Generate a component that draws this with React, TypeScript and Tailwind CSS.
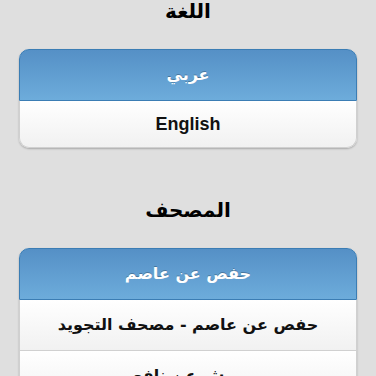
const arabic = { fontFamily: '"DejaVu Sans", "Liberation Sans", sans-serif' }

type Option = { label: string; latin?: boolean }

const Section = ({ title, selected, options }: { title: string; selected: Option; options: Option[] }) => {
    return <div className="flex flex-col">
        <h2 className="h-[20px] text-center text-[20px] leading-[22px] font-bold text-black" style={arabic}>{title}</h2>
        <div className="mx-[19px] mt-[29px] rounded-[10px] bg-white shadow-[0_1px_2px_rgba(0,0,0,0.25)]">
            <div className="flex h-[52px] items-center justify-center rounded-t-[10px] border border-[#3b7db4] bg-gradient-to-b from-[#5590c6] to-[#6dacdb] text-[16px] font-bold text-white [text-shadow:0_-1px_0_rgba(0,0,0,0.25)]" style={arabic} dir="rtl">
                {selected.label}
            </div>
            {options.map((o, i) => {
                const last = i === options.length - 1
                return <div key={i} className={`flex items-center justify-center border-x border-b border-[#d0d0d0] bg-gradient-to-b from-white to-[#f1f1f1] font-bold text-[#111] ${last ? "h-[47px] rounded-b-[10px]" : "h-[51px]"} ${o.latin ? "text-[18px]" : "text-[16px]"}`} style={o.latin ? { fontFamily: '"Liberation Sans", Arial, sans-serif' } : arabic} dir={o.latin ? "ltr" : "rtl"}>
                    {o.label}
                </div>
            })}
        </div>
    </div>
}

export default function App() {
    return <div className="min-h-[376px] w-[376px] overflow-hidden bg-[#dfdfdf] pb-10">
        <Section title="اللغة" selected={{ label: "عربي" }} options={[{ label: "English", latin: true }]} />
        <div className="h-[51px]" />
        <Section title="المصحف" selected={{ label: "حفص عن عاصم" }} options={[{ label: "حفص عن عاصم - مصحف التجويد" }, { label: "ورش عن نافع" }, { label: "قالون عن نافع" }]} />
    </div>
}
